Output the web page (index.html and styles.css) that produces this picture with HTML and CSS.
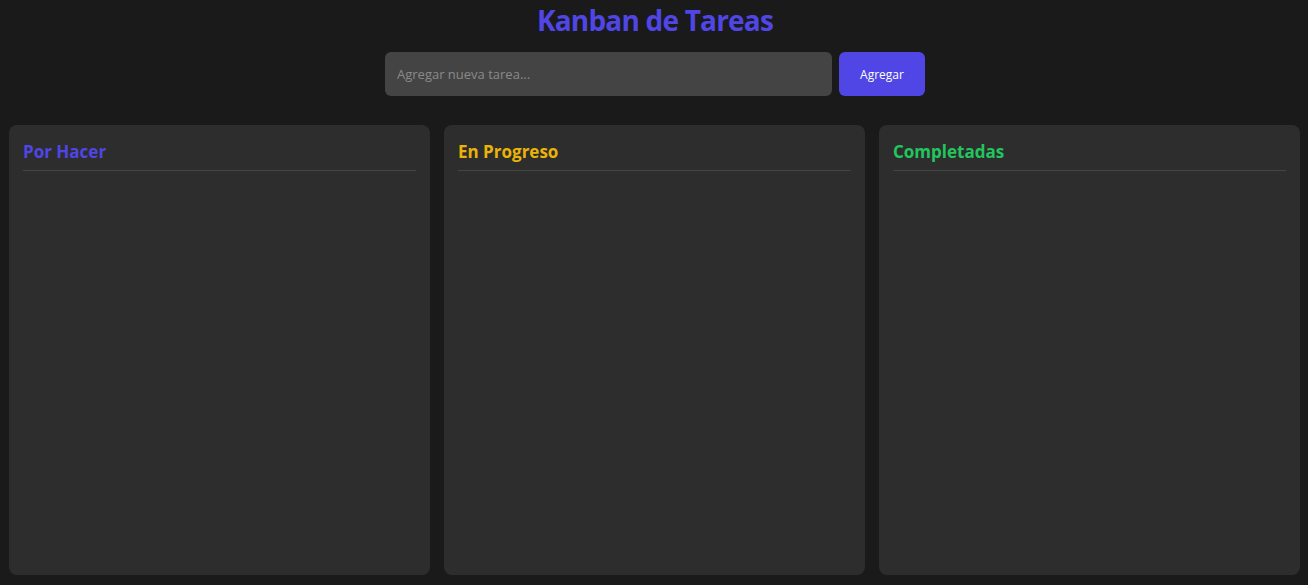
FILE: index.html
```html
<!DOCTYPE html>
<html lang="es">
<head>
<meta charset="utf-8">
<title>Kanban de Tareas</title>
<link rel="stylesheet" href="styles.css">
</head>
<body>
<h1 class="title">Kanban de Tareas</h1>
<form class="add-form" onsubmit="return false">
  <input class="add-input" type="text" placeholder="Agregar nueva tarea...">
  <button class="add-btn" type="submit">Agregar</button>
</form>
<main class="board">
  <section class="column">
    <h2 class="column-title todo">Por Hacer</h2>
  </section>
  <section class="column">
    <h2 class="column-title progress">En Progreso</h2>
  </section>
  <section class="column">
    <h2 class="column-title done">Completadas</h2>
  </section>
</main>
</body>
</html>
```
FILE: styles.css
```css
* { box-sizing: border-box; }
html, body { height: 100%; }
body {
  margin: 0;
  background: #1a1a1a;
  color: #e5e5e5;
  font-family: "Open Sans", "Noto Sans", Arial, sans-serif;
}
.title {
  margin: 0;
  padding-left: 2px;
  text-align: center;
  font-size: 28px;
  line-height: 40px;
  letter-spacing: -0.8px;
  font-weight: 700;
  color: #4f46e5;
}
.add-form {
  display: flex;
  justify-content: center;
  gap: 7px;
  margin-top: 12px;
  padding-left: 2px;
}
.add-input {
  width: 447px;
  height: 44px;
  padding: 0 12px;
  border: none;
  border-radius: 6px;
  background: #444444;
  color: #e5e5e5;
  font-family: inherit;
  font-size: 13px;
  outline: none;
}
.add-input::placeholder { color: #8a8a8a; }
.add-btn {
  width: 86px;
  height: 44px;
  border: none;
  border-radius: 6px;
  background: #4f46e5;
  color: #ffffff;
  font-family: inherit;
  font-size: 12px;
}
.board {
  display: grid;
  grid-template-columns: repeat(3, 1fr);
  gap: 14px;
  margin: 29px 8px 0 9px;
}
.column {
  height: 450px;
  background: #2d2d2d;
  border-radius: 8px;
  padding: 15px 14px;
}
.column-title {
  margin: 0;
  padding-bottom: 7px;
  border-bottom: 1px solid #444444;
  font-size: 17px;
  line-height: 23px;
  font-weight: 700;
}
.todo { color: #4f46e5; }
.progress { color: #eab308; }
.done { color: #22c55e; }
```
